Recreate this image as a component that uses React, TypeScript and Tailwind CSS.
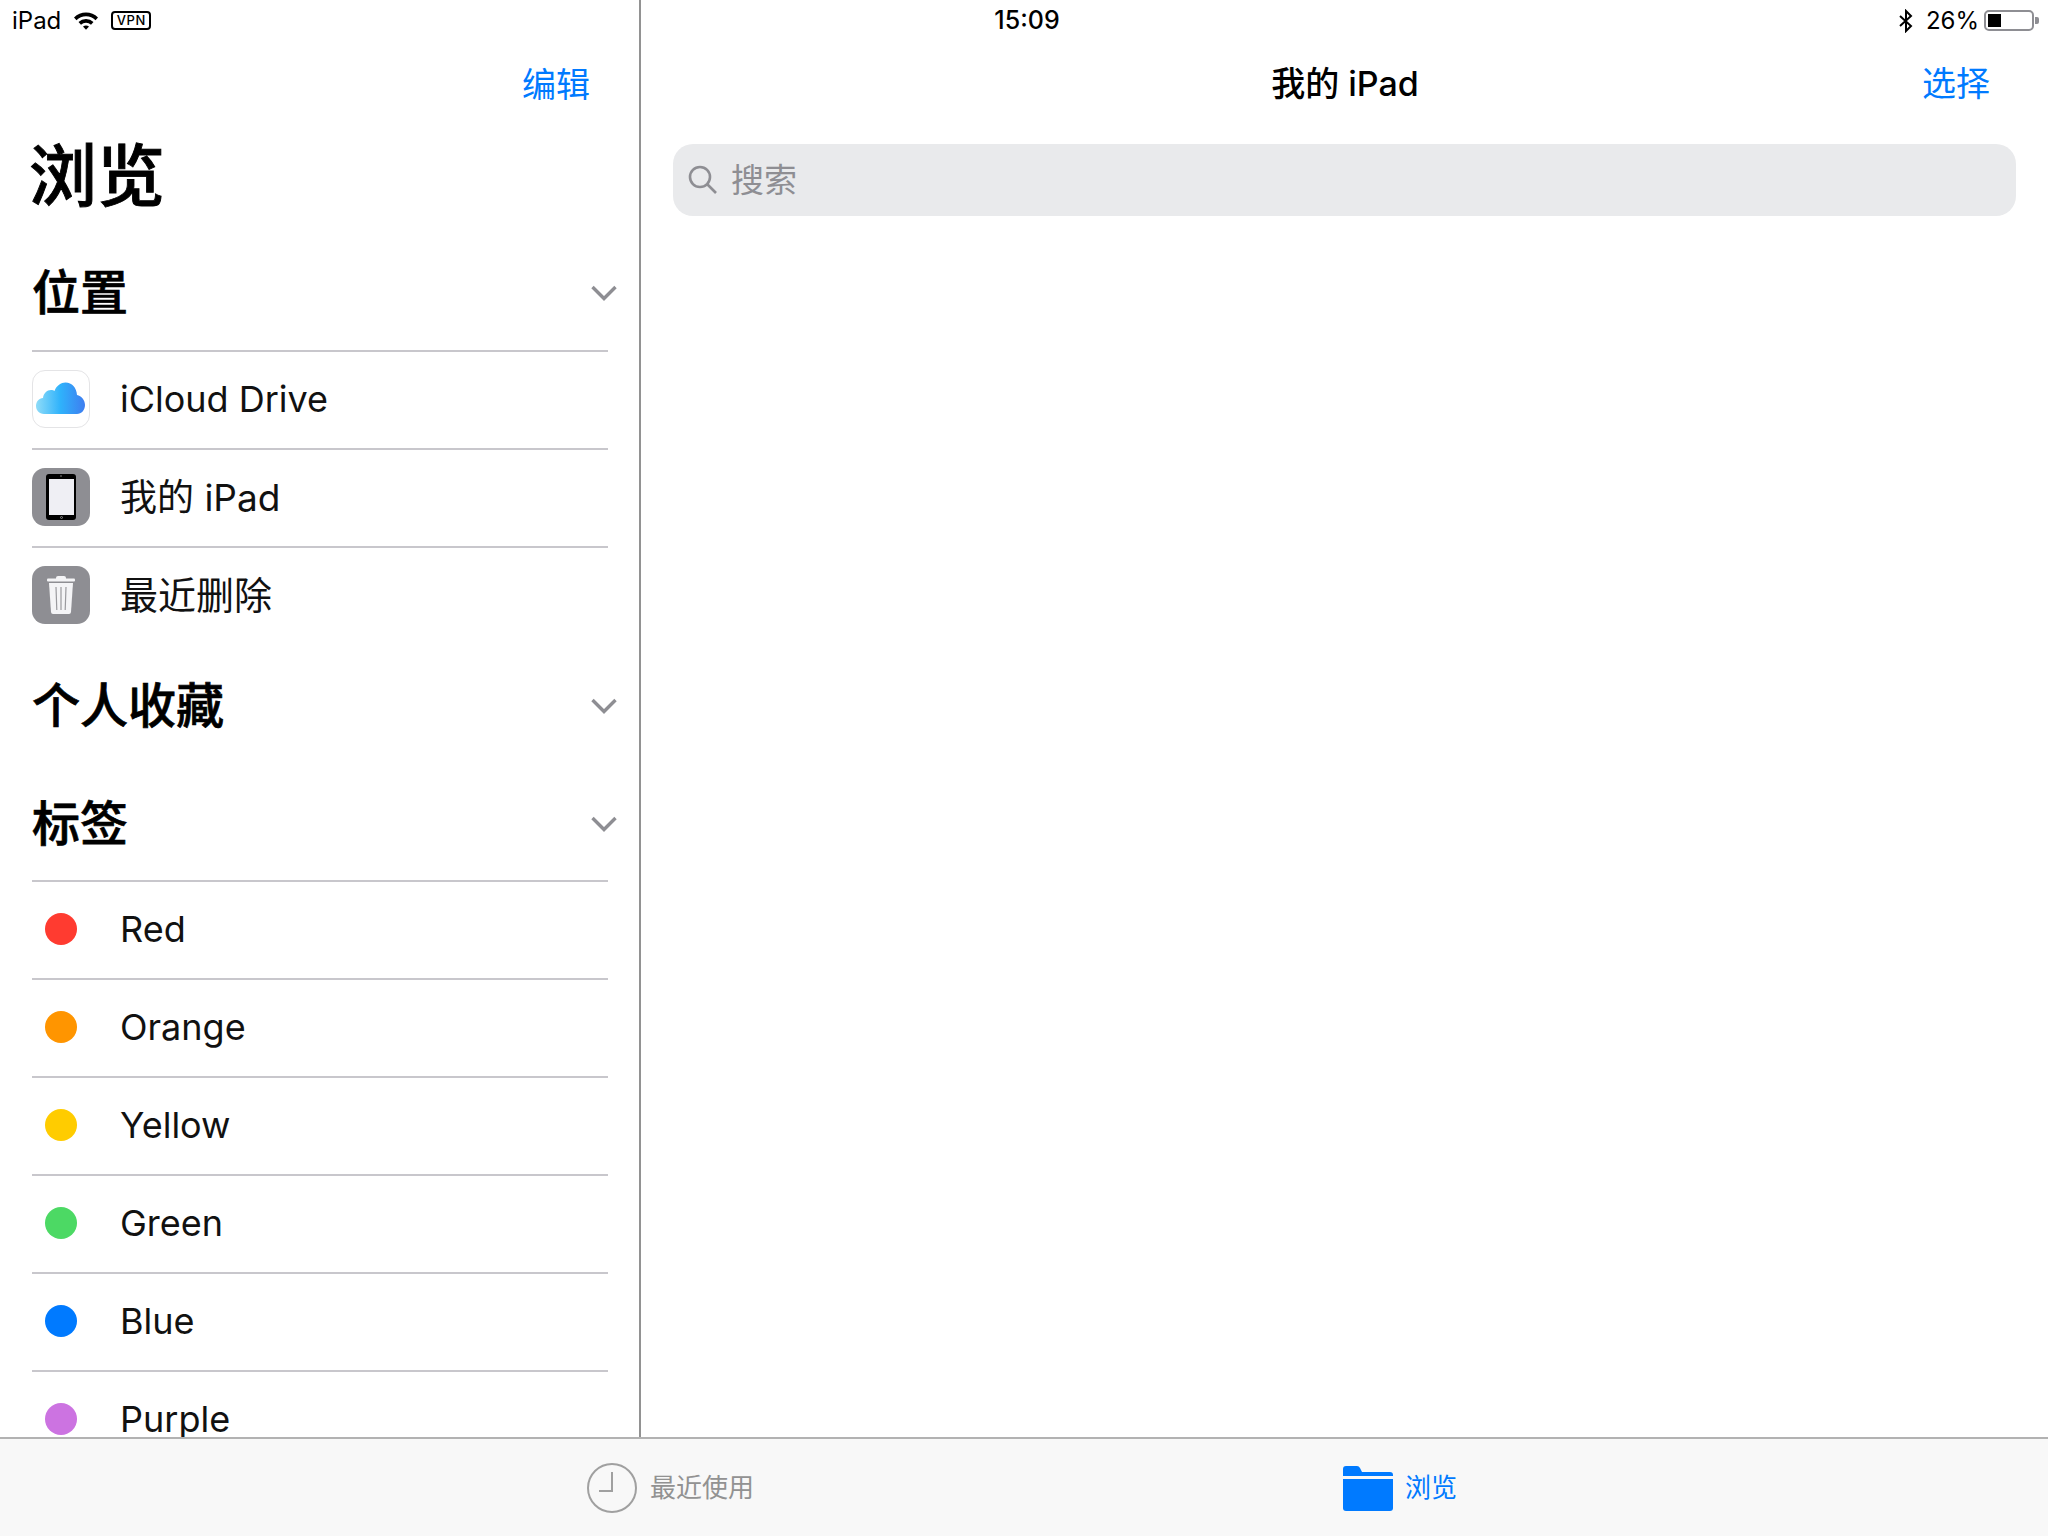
import React from "react";

const SANS = "font-['Inter','Noto_Sans_CJK_SC',sans-serif]";

const Chevron = () => (
  <svg width="28" height="18" viewBox="0 0 28 18" fill="none" className="mr-[-10px]">
    <path d="M2.5 3 L14 14.5 L25.5 3" stroke="#8e8e93" strokeWidth="3.4" />
  </svg>
);

const CloudIcon = () => (
  <div className="flex h-[58px] w-[58px] items-center justify-center rounded-[13px] border border-[#e4e4e6] bg-white">
    <svg width="50" height="34" viewBox="0 0 50 34">
      <defs>
        <linearGradient id="cloud" x1="0" y1="0" x2="1" y2="0">
          <stop offset="0" stopColor="#8fdcf8" />
          <stop offset="0.5" stopColor="#2fb2fb" />
          <stop offset="1" stopColor="#3e7df0" />
        </linearGradient>
      </defs>
      <path
        d="M8 32 C3 32 0 28 0 24 C0 19.500 3 16.500 7 16 C7.500 11.500 11 8 15 8 C16.500 8 17.500 8.400 18.500 9 C20.500 3.500 25 0.500 29.500 0.500 C36 0.500 40.500 5.500 41 13 C45.500 14 49 18 49 23 C49 28 45.500 32 41 32 Z"
        fill="url(#cloud)"
      />
    </svg>
  </div>
);

const IpadIcon = () => (
  <div className="flex h-[58px] w-[58px] items-center justify-center rounded-[13px] bg-[#8e8e93]">
    <div className="flex h-[46px] w-[30px] flex-col items-center justify-between rounded-[3px] bg-black py-[1px]">
      <div className="h-[2px] w-[2px] rounded-full bg-[#555]" />
      <div className="h-[36px] w-[25px] bg-[#efeff4]" />
      <div className="h-[3px] w-[3px] rounded-full border-[0.5px] border-[#888]" />
    </div>
  </div>
);

const TrashIcon = () => (
  <div className="flex h-[58px] w-[58px] items-center justify-center rounded-[13px] bg-[#8e8e93]">
    <svg width="28" height="40" viewBox="0 0 28 40">
      <path d="M9 3 Q9 1 11 1 H17 Q19 1 19 3 V4 H9 Z" fill="#f4f4f6" />
      <rect x="0" y="3.500" width="28" height="3" rx="1" fill="#f4f4f6" />
      <path d="M2 8 H26 L24 37 Q23.800 39 22 39 H6 Q4.200 39 4 37 Z" fill="#f4f4f6" />
      <path d="M9 12 L9.800 35 M14 12 V35 M19 12 L18.200 35" stroke="#9a9a9e" strokeWidth="1.200" />
    </svg>
  </div>
);

const Row = ({
  icon,
  label,
  size = "text-[36px]",
}: {
  icon: React.ReactNode;
  label: string;
  size?: string;
}) => (
  <div className="flex h-[98px] shrink-0 items-center gap-[30px] border-t-2 border-[#c8c7cc] pb-[2px]">
    <div className="flex w-[58px] shrink-0 items-center justify-center">{icon}</div>
    <span className={`${size} leading-none text-[#111]`}>{label}</span>
  </div>
);

const Dot = ({ color }: { color: string }) => (
  <div className={`h-[32px] w-[32px] rounded-full ${color}`} />
);

const SectionHead = ({ title, className }: { title: string; className: string }) => (
  <div className={`flex shrink-0 items-center justify-between pt-[3px] ${className}`}>
    <span className="text-[48px] font-medium leading-none text-black [-webkit-text-stroke:0.7px_black]">
      {title}
    </span>
    <Chevron />
  </div>
);

const tags = [
  { label: "Red", color: "bg-[#ff3b30]" },
  { label: "Orange", color: "bg-[#ff9500]" },
  { label: "Yellow", color: "bg-[#ffcc00]" },
  { label: "Green", color: "bg-[#4cd964]" },
  { label: "Blue", color: "bg-[#007aff]" },
  { label: "Purple", color: "bg-[#cc73e1]" },
];

const StatusBar = () => (
  <div className="absolute inset-x-0 top-0 flex h-[40px] items-center justify-between pl-[12px] pr-[9px] pt-[1px] text-[24px] leading-none text-black">
    <div className="flex items-center">
      <span>iPad</span>
      <svg width="26" height="19" viewBox="0 0 26 19" className="ml-[12px]">
        <path d="M1 6.500 A17 17 0 0 1 25 6.500 L22.500 9.200 A13.500 13.500 0 0 0 3.500 9.200 Z" fill="#000" />
        <path d="M5.500 11 A11 11 0 0 1 20.500 11 L18 13.700 A7.500 7.500 0 0 0 8 13.700 Z" fill="#000" />
        <path d="M10 15.500 A5 5 0 0 1 16 15.500 L13 18.700 Z" fill="#000" />
      </svg>
      <div className="ml-[12px] flex h-[19px] w-[40px] items-center justify-center rounded-[4px] border-2 border-black text-[13px] font-medium tracking-[0.5px]">
        VPN
      </div>
    </div>
    <span className="absolute left-[1027px] -translate-x-1/2 text-[25px] font-medium">15:09</span>
    <div className="flex items-center">
      <svg width="16" height="24" viewBox="0 0 16 24" fill="none">
        <path d="M2 7 L13 17 L8 22 V2 L13 7 L2 17" stroke="#000" strokeWidth="2" />
      </svg>
      <span className="ml-[12px]">26%</span>
      <div className="ml-[5px] flex h-[21px] w-[50px] items-center rounded-[5px] border-2 border-[#8e8e93] p-[2px]">
        <div className="h-full w-[13px] bg-black" />
      </div>
      <div className="ml-[1px] h-[7px] w-[4px] rounded-r-[2px] bg-[#8e8e93]" />
    </div>
  </div>
);

export default function App() {
  return (
    <div className={`relative flex h-[1536px] w-[2048px] flex-col overflow-hidden bg-white ${SANS}`}>
      <StatusBar />

      <div className="flex min-h-0 flex-1">
        {/* SIDEBAR */}
        <aside className="flex w-[641px] shrink-0 flex-col overflow-hidden border-r-2 border-[#929292] pt-[40px]">
          <div className="flex h-[88px] shrink-0 items-center justify-end pr-[49px] pt-[2px] text-[34px] leading-none text-[#007aff]">
            编辑
          </div>
          <div className="flex flex-col pl-[32px] pr-[31px]">
            <h1 className="-ml-[3px] flex h-[104px] shrink-0 items-center pb-[8px] text-[68px] font-medium leading-none text-black [-webkit-text-stroke:0.9px_black]">
              浏览
            </h1>
            <SectionHead title="位置" className="h-[118px]" />
            <Row icon={<CloudIcon />} label="iCloud Drive" />
            <Row icon={<IpadIcon />} label="我的 iPad" size="text-[37px]" />
            <Row icon={<TrashIcon />} label="最近删除" size="text-[38px]" />
            <SectionHead title="个人收藏" className="h-[120px]" />
            <SectionHead title="标签" className="h-[116px]" />
            {tags.map((t) => (
              <Row key={t.label} icon={<Dot color={t.color} />} label={t.label} />
            ))}
          </div>
        </aside>

        {/* CONTENT */}
        <main className="flex min-w-0 flex-1 flex-col pt-[40px]">
          <div className="flex h-[88px] shrink-0 items-center justify-between pl-[59px] pr-[58px] text-[34px] leading-none">
            <span className="invisible">选择</span>
            <span className="font-medium text-black">我的 iPad</span>
            <span className="text-[#007aff]">选择</span>
          </div>
          <div className="mx-[32px] mt-[16px] flex h-[72px] items-center rounded-[20px] bg-[#e9eaec] pl-[14px]">
            <svg width="32" height="32" viewBox="0 0 32 32" fill="none" stroke="#8e8e93" strokeWidth="2.600">
              <circle cx="13" cy="13" r="10" />
              <path d="M20 20 L29 29" />
            </svg>
            <span className="ml-[12px] text-[33px] leading-none text-[#8e8e93]">搜索</span>
          </div>
        </main>
      </div>

      {/* TAB BAR */}
      <div className="flex h-[99px] shrink-0 items-center border-t-2 border-[#b2b2b2] bg-[#f8f8f8] pl-[587px]">
        <div className="flex items-center text-[26px] leading-none text-[#929292]">
          <svg width="50" height="50" viewBox="0 0 50 50" fill="none" stroke="#a0a0a0" strokeWidth="2">
            <circle cx="25" cy="25" r="24" />
            <path d="M25 9 V28 H12" />
          </svg>
          <span className="ml-[13px]">最近使用</span>
        </div>
        <div className="ml-[589px] flex items-center text-[26px] leading-none text-[#007aff]">
          <svg width="50" height="45" viewBox="0 0 50 45" className="mt-[2px]">
            <path d="M0 10 V3 Q0 0 3 0 H14 Q16 0 17 2 L19 6 H47 Q50 6 50 9 V10 Z" fill="#007aff" />
            <path d="M0 13 H50 V42 Q50 45 47 45 H3 Q0 45 0 42 Z" fill="#007aff" />
          </svg>
          <span className="ml-[12px]">浏览</span>
        </div>
      </div>
    </div>
  );
}
